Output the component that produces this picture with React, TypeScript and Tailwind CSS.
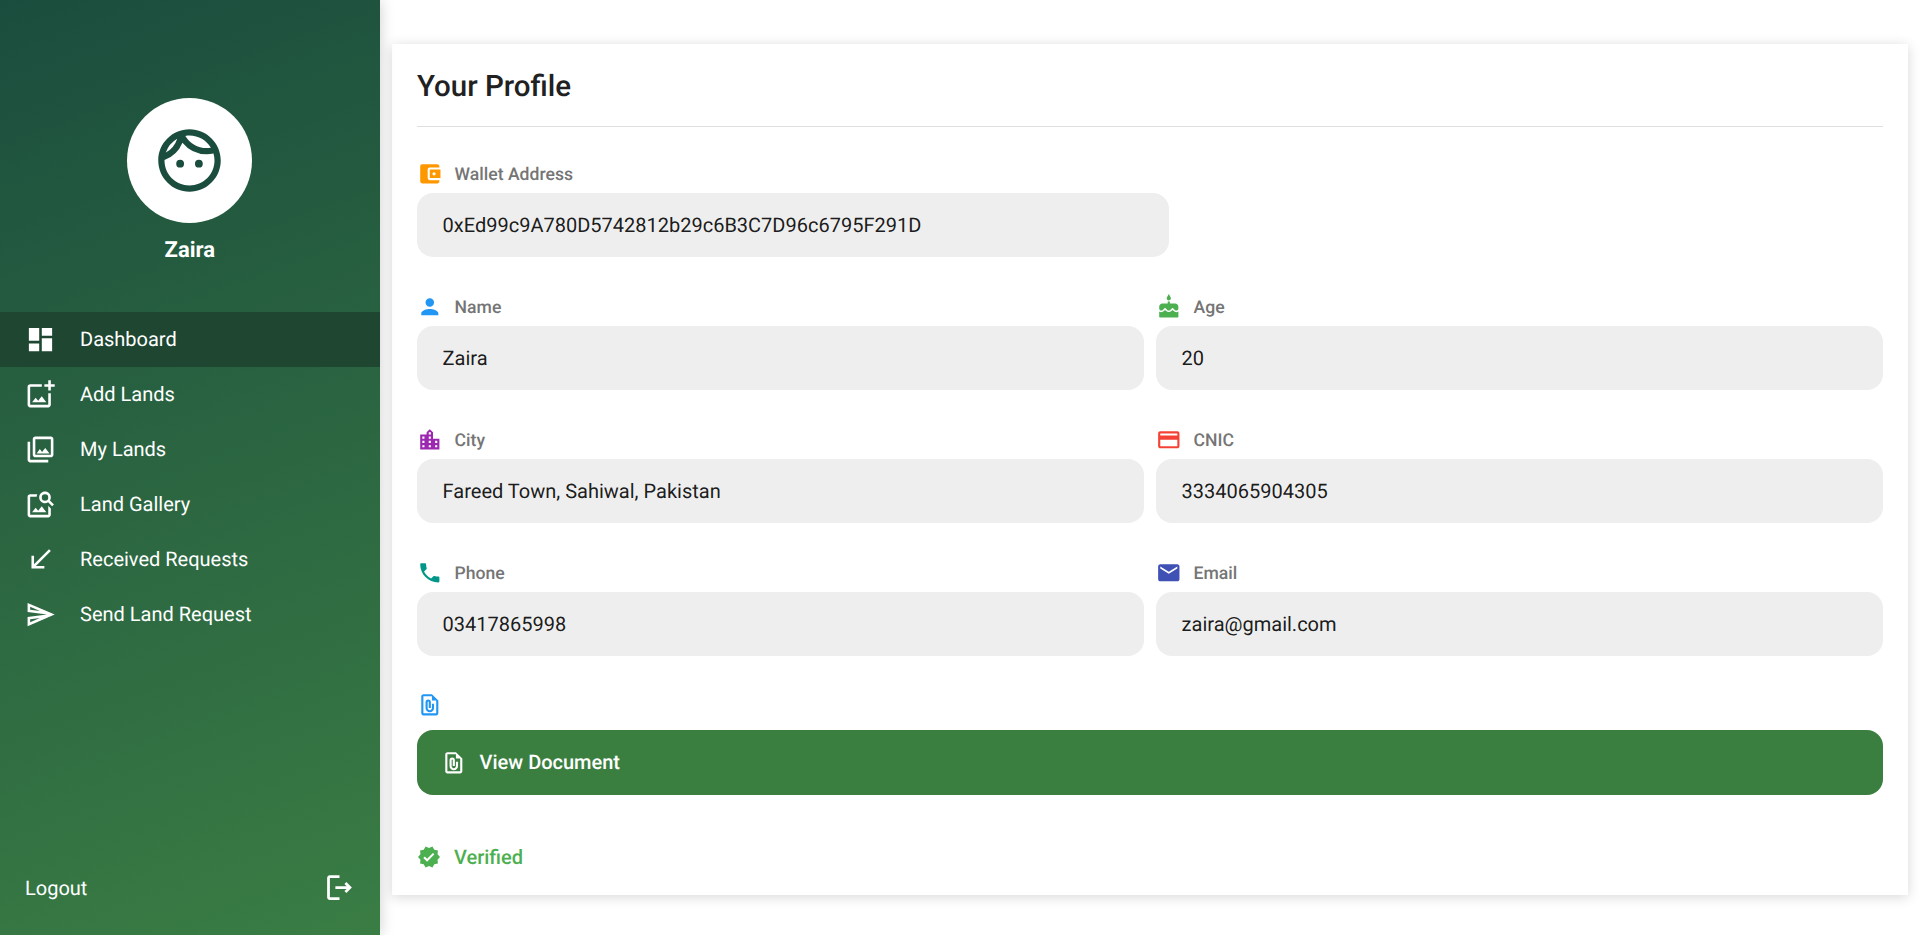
import React from "react";
import {
  MdDashboard, MdOutlineAddPhotoAlternate, MdOutlinePhotoLibrary, MdOutlineImageSearch,
  MdCallReceived, MdOutlineSend, MdOutlineFace, MdAccountBalanceWallet, MdPerson, MdCake,
  MdLocationCity, MdCreditCard, MdPhone, MdEmail, MdOutlineFilePresent, MdVerified, MdOutlineLogout,
} from "react-icons/md";

const nav = [
  { label: "Dashboard", Icon: MdDashboard, active: true },
  { label: "Add Lands", Icon: MdOutlineAddPhotoAlternate },
  { label: "My Lands", Icon: MdOutlinePhotoLibrary },
  { label: "Land Gallery", Icon: MdOutlineImageSearch },
  { label: "Received Requests", Icon: MdCallReceived },
  { label: "Send Land Request", Icon: MdOutlineSend },
];

function Field({ label, value, Icon, color }: { label: string; value: string; Icon: any; color: string }) {
  return (
    <div className="flex flex-col">
      <div className="flex h-[24px] items-center">
        <Icon className={`w-[25.6px] h-[25.6px] shrink-0 ${color}`} />
        <span className="ml-[12px] pt-[2px] text-[17.6px] font-medium leading-[24px] text-[#757575]">{label}</span>
      </div>
      <div className="mt-[7px] flex h-[64px] items-center rounded-[16px] bg-[#eeeeee] pl-[25.6px] text-[20px] text-black/90">
        {value}
      </div>
    </div>
  );
}

export default function App() {
  return (
    <div className="flex h-[935px] overflow-hidden bg-white font-['Roboto',sans-serif] [text-rendering:geometricPrecision]">
      <aside className="relative z-10 flex h-full w-[380px] shrink-0 flex-col bg-[linear-gradient(160deg,#1b4d3e,#3a7d44)] text-white shadow-[0_0_14px_rgba(0,0,0,0.2)]">
        <div className="flex flex-col items-center pr-[0.4px] pt-[98px]">
          <div className="flex h-[125px] w-[125px] items-center justify-center rounded-full bg-white">
            <MdOutlineFace className="h-[75px] w-[75px] text-[#1b4d3e]" />
          </div>
          <div className="mt-[13px] text-[22px] font-bold leading-[30px]">Zaira</div>
        </div>
        <nav className="mt-[46px] flex flex-col">
          {nav.map(({ label, Icon, active }) => (
            <div key={label} className={`flex h-[55px] items-center pl-[25px] ${active ? "bg-[#1e4630]" : ""}`}>
              <Icon className="h-[31px] w-[31px] shrink-0" />
              <span className="ml-[24px] pb-px text-[20px] leading-[28px]">{label}</span>
            </div>
          ))}
        </nav>
        <div className="mt-auto flex items-center justify-between pb-[31px] pl-[25px] pr-[24px]">
          <span className="text-[20px] leading-[28px]">Logout</span>
          <MdOutlineLogout className="h-[33px] w-[33px]" />
        </div>
      </aside>
      <main className="min-w-0 flex-1 pl-[12px] pr-[12px] pt-[44px]">
        <div className="h-[851px] bg-white px-[25px] pt-[22px] shadow-[0_2px_12px_rgba(0,0,0,0.16)]">
          <h1 className="text-[29.5px] font-medium leading-[42px] text-[#212121]">Your Profile</h1>
          <div className="mt-[18px] h-px bg-[#e0e0e0]" />
          <div className="mt-[35px] w-[752px]">
            <Field label="Wallet Address" value="0xEd99c9A780D5742812b29c6B3C7D96c6795F291D" Icon={MdAccountBalanceWallet} color="text-[#ff9800]" />
          </div>
          <div className="mt-[38px] grid grid-cols-2 gap-x-[12px] gap-y-[38px]">
            <Field label="Name" value="Zaira" Icon={MdPerson} color="text-[#2196f3]" />
            <Field label="Age" value="20" Icon={MdCake} color="text-[#4caf50]" />
            <Field label="City" value="Fareed Town, Sahiwal, Pakistan" Icon={MdLocationCity} color="text-[#9c27b0]" />
            <Field label="CNIC" value="3334065904305" Icon={MdCreditCard} color="text-[#f44336]" />
            <Field label="Phone" value="03417865998" Icon={MdPhone} color="text-[#009688]" />
            <Field label="Email" value="zaira@gmail.com" Icon={MdEmail} color="text-[#3f51b5]" />
          </div>
          <div className="mt-[37px] flex h-[24px] items-center">
            <MdOutlineFilePresent className="h-[25.6px] w-[25.6px] text-[#2196f3]" />
          </div>
          <div className="mt-[13px] flex h-[65px] items-center rounded-[16px] bg-[#3b7f40] pl-[24px] text-white">
            <MdOutlineFilePresent className="h-[25.6px] w-[25.6px]" />
            <span className="ml-[13px] pb-px text-[20px] font-medium">View Document</span>
          </div>
          <div className="mt-[50px] flex h-[24px] items-center text-[#4caf50]">
            <MdVerified className="h-[24px] w-[24px]" />
            <span className="ml-[13px] text-[20px] font-medium">Verified</span>
          </div>
        </div>
      </main>
    </div>
  );
}
